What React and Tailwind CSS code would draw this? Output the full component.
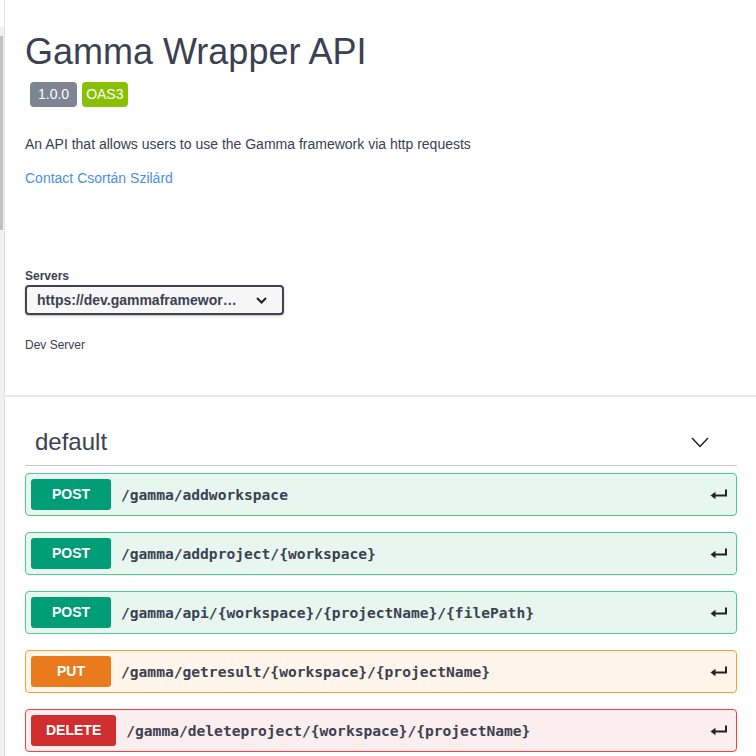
const ops = [
  { method: 'POST', path: '/gamma/addworkspace' },
  { method: 'POST', path: '/gamma/addproject/{workspace}' },
  { method: 'POST', path: '/gamma/api/{workspace}/{projectName}/{filePath}' },
  { method: 'PUT', path: '/gamma/getresult/{workspace}/{projectName}' },
  { method: 'DELETE', path: '/gamma/deleteproject/{workspace}/{projectName}' },
]

const styles = {
  POST: { row: 'border-[#49cc90] bg-[#e8f6f0]', badge: 'bg-[#009d77]' },
  PUT: { row: 'border-[#fca130] bg-[#fff5ea]', badge: 'bg-[#e97b1c]' },
  DELETE: { row: 'border-[#f93e3e] bg-[#fbeeee]', badge: 'bg-[#d12f2f]' },
}

function EnterIcon() {
  return (
    <svg width="18" height="11" viewBox="0 0 18 11" className="text-[#222]">
      <path d="M16 0.5V6.5H5" fill="none" stroke="currentColor" strokeWidth="2" />
      <path d="M0.5 6.5L5.5 2.8V10.2Z" fill="currentColor" />
    </svg>
  )
}

function Operation({ method, path }) {
  const s = styles[method]
  return (
    <div className={`mb-[16px] flex h-[43px] items-center rounded-[4px] border px-[5px] ${s.row}`}>
      <span
        className={`flex h-[31px] min-w-[80px] items-center justify-center rounded-[3px] px-[15px] text-[14px] font-bold text-white [text-shadow:0_1px_0_rgba(0,0,0,0.1)] ${s.badge}`}
      >
        {method}
      </span>
      <span className="ml-[10px] flex-1 font-['DejaVu_Sans_Mono',monospace] text-[14.6px] font-bold text-[#3b4151]">
        {path}
      </span>
      <span className="mr-[3px]">
        <EnterIcon />
      </span>
    </div>
  )
}

export default function App() {
  return (
    <div className="flex min-h-[756px] bg-white font-['Liberation_Sans',Arial,sans-serif] text-[#3b4151]">
      <div className="w-[5px] shrink-0 border-r border-[#e3e3e3] pt-[27px]">
        <div className="h-full bg-[#f1f1f1] pt-[9px]">
          <div className="h-[194px] w-[3px] bg-[#c1c1c1]" />
        </div>
      </div>

      <div className="flex-1">
        <div className="pl-[20px] pr-[19px] pt-[34px]">
          <h1 className="text-[36px] leading-[36px]">Gamma Wrapper API</h1>
          <div className="mt-[12px] flex gap-[5px] pl-[5px]">
            <span className="flex h-[25px] items-center rounded-[4px] bg-[#7d8492] px-[8px] text-[14px] text-white">
              1.0.0
            </span>
            <span className="flex h-[25px] items-center rounded-[4px] bg-[#89bf04] px-[4px] text-[14px] text-white">
              OAS3
            </span>
          </div>
          <p className="mt-[27px] text-[14px] leading-[20px]">
            An API that allows users to use the Gamma framework via http requests
          </p>
          <p className="mt-[14px] text-[14px] leading-[20px] text-[#4990e2]">Contact Csortán Szilárd</p>

          <div className="mt-[80px] text-[12px] font-bold leading-[16px]">Servers</div>
          <div className="mt-[1px] flex h-[30px] w-[259px] items-center justify-between rounded-[4px] border-2 border-[#41444e] bg-[#f7f7f7] pl-[10px] pr-[15px] shadow-[0_1px_2px_rgba(0,0,0,0.25)]">
            <span className="text-[14px] font-bold text-[#3b4151]">https://dev.gammaframewor…</span>
            <svg width="11" height="7" viewBox="0 0 11 7">
              <path d="M1 1L5.5 5.5L10 1" fill="none" stroke="#222" strokeWidth="2" />
            </svg>
          </div>
          <div className="mt-[22px] text-[12px] leading-[16px]">Dev Server</div>
        </div>

        <div className="mt-[42px] h-[2px] bg-[#e8e8e8]" />

        <div className="pl-[20px] pr-[19px]">
          <div className="mt-[30px] flex items-center justify-between border-b border-[#c8c8cc] pb-[8px] pl-[10px] pr-[28px]">
            <span className="text-[24px] leading-[30px]">default</span>
            <svg width="18" height="11" viewBox="0 0 18 11">
              <path d="M1 1L9 9.5L17 1" fill="none" stroke="#222" strokeWidth="1.5" />
            </svg>
          </div>
          <div className="mt-[7px]">
            {ops.map((op) => (
              <Operation key={op.path} {...op} />
            ))}
          </div>
        </div>
      </div>
    </div>
  )
}
